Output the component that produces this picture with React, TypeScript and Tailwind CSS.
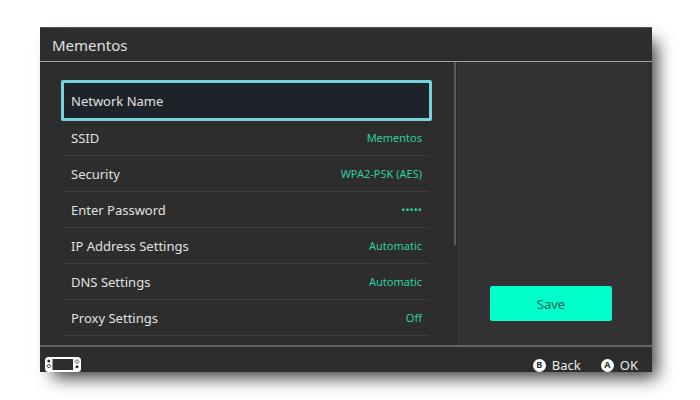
const settings = [
  { label: 'SSID', value: 'Mementos' },
  { label: 'Security', value: 'WPA2-PSK (AES)' },
  { label: 'Enter Password', value: '•••••' },
  { label: 'IP Address Settings', value: 'Automatic' },
  { label: 'DNS Settings', value: 'Automatic' },
  { label: 'Proxy Settings', value: 'Off' },
];

function ConsoleIcon() {
  return (
    <svg width="36" height="15" viewBox="0 0 36 15" aria-hidden="true">
      <rect width="36" height="15" rx="3.5" fill="#fff" />
      <rect x="7.5" y="2" width="20.5" height="11" fill="#2d2d2d" />
      <circle cx="3.8" cy="4" r="1.5" fill="#2d2d2d" />
      <circle cx="32" cy="9.8" r="1.5" fill="#2d2d2d" />
      <g fill="none" stroke="#2d2d2d" strokeWidth="0.9">
        <path d="M3.8 7 5.8 9 3.8 11 1.8 9Z" />
        <path d="M32 2.6 34 4.6 32 6.6 30 4.6Z" />
      </g>
    </svg>
  );
}

function Hint({ glyph, text }: { glyph: string; text: string }) {
  return (
    <button className="flex items-center gap-1.5 text-[13px] leading-3.5 text-[#ececec]">
      <span className="flex size-[13px] items-center justify-center rounded-full bg-white text-[9px] leading-3 font-bold text-[#2d2d2d]">
        {glyph}
      </span>
      {text}
    </button>
  );
}

export default function App() {
  return (
    <div className="min-h-screen bg-white pt-[27px] pr-12 pb-7 pl-10 font-['Noto_Sans','Open_Sans',sans-serif]">
      <main className="bg-[#2d2d2d] text-[#e0e0e0] shadow-[9px_10px_16px_-4px_rgba(0,0,0,0.75)]">
        <header className="flex h-[35px] items-center border-t border-b border-t-[#555] border-b-[#a0a0a0] px-3">
          <h1 className="text-[15px] leading-6">Mementos</h1>
        </header>

        <div className="flex">
          <section className="flex min-w-0 flex-1 pr-0.5 pl-6">
            <ul className="min-w-0 flex-1 pt-[18px] pb-[9px]">
              <li className="relative -mx-[3px] -mb-px">
                <button className="flex h-[41px] w-full items-center rounded-xs border-[3px] border-[#76d2da] bg-[#1e2229] px-[7px] text-[13px] leading-5">
                  Network Name
                </button>
              </li>
              {settings.map((item) => (
                <li key={item.label} className="border-b border-[#3d3d3d]">
                  <button className="flex h-[35px] w-full items-center justify-between px-[7px] text-[13px] leading-5">
                    <span>{item.label}</span>
                    <span className="text-[11px] text-[#2ecfa0]">{item.value}</span>
                  </button>
                </li>
              ))}
            </ul>
            <div className="ml-[25px] h-[183px] w-0.5 bg-[#5c5c5c]" />
          </section>

          <aside className="flex w-[194px] flex-col justify-end bg-[#323232] pr-10 pb-6 pl-8">
            <button className="h-[35px] rounded-xs bg-[#00ffcb] text-[13px] leading-5 text-[#14604f]">
              Save
            </button>
          </aside>
        </div>

        <footer className="flex h-[27px] items-end justify-between border-t-2 border-[#636363] pr-3.5 pl-[5px]">
          <ConsoleIcon />
          <div className="flex gap-5">
            <Hint glyph="B" text="Back" />
            <Hint glyph="A" text="OK" />
          </div>
        </footer>
      </main>
    </div>
  );
}
